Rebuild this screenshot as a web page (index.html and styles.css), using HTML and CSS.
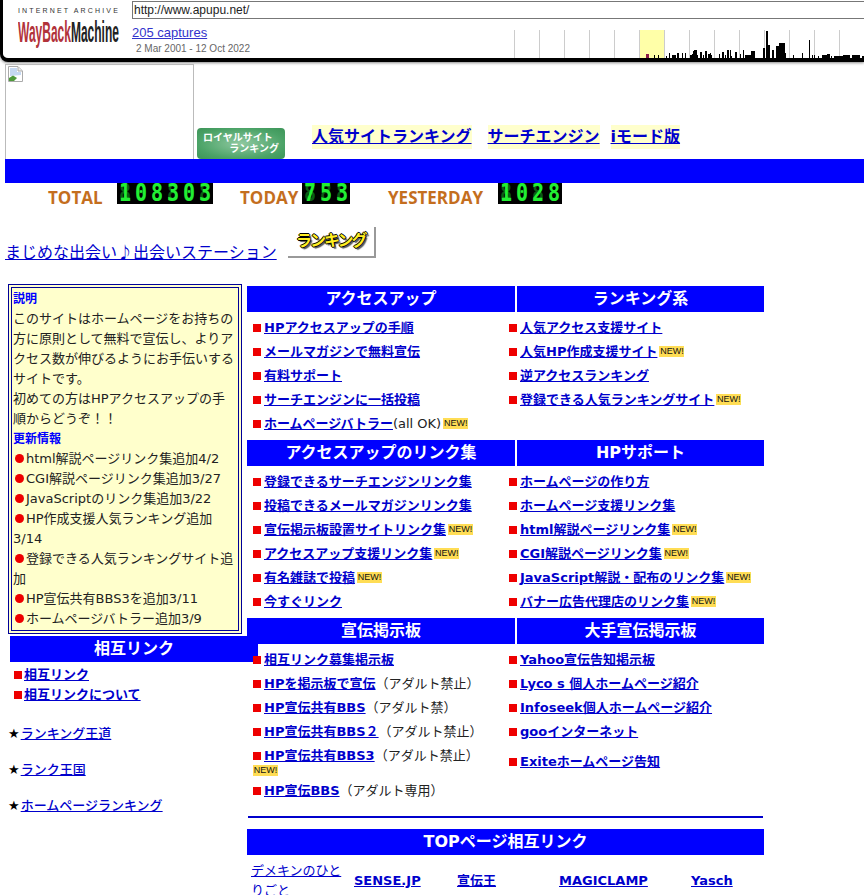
FILE: index.html
```html
<!DOCTYPE html>
<html lang="ja">
<head>
    <meta charset="UTF-8">
    <title>相互リンク</title>
    <link rel="stylesheet" href="styles.css">
</head>
<body>
    <div class="toolbar">
        <div class="wb-logo">
            <div class="wb-ia">INTERNET ARCHIVE</div>
            <div class="wb-mark"><span class="wb-red">WayBack</span>Machine</div>
        </div>
        <div class="wb-main">
            <div class="wb-url">http://www.apupu.net/</div>
            <div class="wb-info">
                <div>
                    <a class="wb-captures" href="#">205 captures</a>
                    <div class="wb-dates">2 Mar 2001 - 12 Oct 2022</div>
                </div>
                <svg class="wb-graph" width="350" height="28" viewBox="514 30 350 28">
                    <rect x="640" y="30" width="24" height="28" fill="#ffffa8"/>
                    <path stroke="#ccc" d="M514.5 30V58M539.5 30V58M564.5 30V58M589.5 30V58M614.5 30V58M639.5 30V58M664.5 30V58M689.5 30V58M714.5 30V58M739.5 30V58M764.5 30V58M789.5 30V58M814.5 30V58M839.5 30V58"/>
                    <path stroke="#8a1c4a" stroke-width="3" d="M647.5 58v-4"/>
                    <path stroke="#000" d="M654.5 58v-3M658.5 58v-3M666.5 58v-2M669.5 58v-5M672.5 58v-3M673.5 58v-3M674.5 58v-3M675.5 58v-3M677.5 58v-5M678.5 58v-5M682.5 58v-5M685.5 58v-5M690.5 58v-3M691.5 58v-3M692.5 58v-4M693.5 58v-7M694.5 58v-8M695.5 58v-8M696.5 58v-8M697.5 58v-3M700.5 58v-6M701.5 58v-6M703.5 58v-3M705.5 58v-7M706.5 58v-7M708.5 58v-4M709.5 58v-4M710.5 58v-5M711.5 58v-3M719.5 58v-4M722.5 58v-6M723.5 58v-6M725.5 58v-3M727.5 58v-8M728.5 58v-8M730.5 58v-8M731.5 58v-2M735.5 58v-6M736.5 58v-6M740.5 58v-4M743.5 58v-8M745.5 58v-3M746.5 58v-3M747.5 58v-3M748.5 58v-3M749.5 58v-3M750.5 58v-3M751.5 58v-7M752.5 58v-7M753.5 58v-7M754.5 58v-7M763.5 58v-10M764.5 58v-10M766.5 58v-27M767.5 58v-27M768.5 58v-13M769.5 58v-13M772.5 58v-8M773.5 58v-8M776.5 58v-12M777.5 58v-12M778.5 58v-12M779.5 58v-15M780.5 58v-15M781.5 58v-15M782.5 58v-15M783.5 58v-15M784.5 58v-15M785.5 58v-5M793.5 58v-3M802.5 58v-5M809.5 58v-18M812.5 58v-3M814.5 58v-3M818.5 58v-2M822.5 58v-3M823.5 58v-3M824.5 58v-3M825.5 58v-3M826.5 58v-3M827.5 58v-4M828.5 58v-4M829.5 58v-4M831.5 58v-2M834.5 58v-2M835.5 58v-2M836.5 58v-2M837.5 58v-2M838.5 58v-2M839.5 58v-2M840.5 58v-2M841.5 58v-2M842.5 58v-2M843.5 58v-3M844.5 58v-3M845.5 58v-3M846.5 58v-3M847.5 58v-3M848.5 58v-3M849.5 58v-3M852.5 58v-3M853.5 58v-3M854.5 58v-3M855.5 58v-3M856.5 58v-3M857.5 58v-3M858.5 58v-3M859.5 58v-3M862.5 58v-2M863.5 58v-2"/>
                </svg>
            </div>
        </div>
    </div>

    <div class="hero">
        <div class="broken-img">
            <svg width="16" height="16" viewBox="0 0 16 16">
                <path d="M1.500.5H11L15.500 5V15.500H1.500Z" fill="#fff" stroke="#aaa"/>
                <path d="M3 2H10V6H14V9L3 10Z" fill="#c5d8f2"/>
                <path d="M2 15V12L6 9.500L10 12L7 15Z" fill="#4f9a3c"/>
                <path d="M11 1V5H15" fill="#eee" stroke="#aaa"/>
            </svg>
        </div>
        <div class="royal-banner">
            <span>ロイヤルサイト</span>
            <span class="royal-second">ランキング</span>
        </div>
        <div class="top-nav">
            <a href="#">人気サイトランキング</a>
            <a href="#">サーチエンジン</a>
            <a href="#">iモード版</a>
        </div>
    </div>
    <div class="band"></div>

    <div class="stats">
        <div class="stat-label total">TOTAL</div>
        <div class="counter"><span>1</span><span>0</span><span>8</span><span>3</span><span>0</span><span>3</span></div>
        <div class="stat-label today">TODAY</div>
        <div class="counter"><span>7</span><span>5</span><span>3</span></div>
        <div class="stat-label yesterday">YESTERDAY</div>
        <div class="counter"><span>1</span><span>0</span><span>2</span><span>8</span></div>
    </div>

    <div class="promo">
        <a href="#">まじめな出会い♪出会いステーション</a>
        <div class="rank-btn">ランキング</div>
    </div>

    <div class="main">
        <div class="left-col">
            <div class="about">
                <div class="about-title">説明</div>
                <p>このサイトはホームページをお持ちの方に原則として無料で宣伝し、よりアクセス数が伸びるようにお手伝いするサイトです。</p>
                <p>初めての方はHPアクセスアップの手順からどうぞ！！</p>
                <div class="about-title">更新情報</div>
                <ul class="news">
                    <li>html解説ページリンク集追加4/2</li>
                    <li>CGI解説ページリンク集追加3/27</li>
                    <li>JavaScriptのリンク集追加3/22</li>
                    <li>HP作成支援人気ランキング追加3/14</li>
                    <li>登録できる人気ランキングサイト追加</li>
                    <li>HP宣伝共有BBS3を追加3/11</li>
                    <li>ホームページバトラー追加3/9</li>
                </ul>
            </div>
            <div class="head side-head">相互リンク</div>
            <ul class="side-links">
                <li class="item"><a href="#">相互リンク</a></li>
                <li class="item"><a href="#">相互リンクについて</a></li>
            </ul>
            <ul class="stars">
                <li><a href="#">ランキング王道</a></li>
                <li><a href="#">ランク王国</a></li>
                <li><a href="#">ホームページランキング</a></li>
            </ul>
        </div>

        <div class="right-col">
            <section class="block">
                <div class="heads"><div class="head">アクセスアップ</div><div class="head">ランキング系</div></div>
                <div class="rows">
                    <div class="item"><a href="#">HPアクセスアップの手順</a></div>
                    <div class="item"><a href="#">人気アクセス支援サイト</a></div>
                    <div class="item"><a href="#">メールマガジンで無料宣伝</a></div>
                    <div class="item"><a href="#">人気HP作成支援サイト</a><span class="new">NEW!</span></div>
                    <div class="item"><a href="#">有料サポート</a></div>
                    <div class="item"><a href="#">逆アクセスランキング</a></div>
                    <div class="item"><a href="#">サーチエンジンに一括投稿</a></div>
                    <div class="item"><a href="#">登録できる人気ランキングサイト</a><span class="new">NEW!</span></div>
                    <div class="item"><a href="#">ホームページバトラー</a>(all OK)<span class="new">NEW!</span></div>
                </div>
            </section>
            <section class="block">
                <div class="heads"><div class="head">アクセスアップのリンク集</div><div class="head">HPサポート</div></div>
                <div class="rows">
                    <div class="item"><a href="#">登録できるサーチエンジンリンク集</a></div>
                    <div class="item"><a href="#">ホームページの作り方</a></div>
                    <div class="item"><a href="#">投稿できるメールマガジンリンク集</a></div>
                    <div class="item"><a href="#">ホームページ支援リンク集</a></div>
                    <div class="item"><a href="#">宣伝掲示板設置サイトリンク集</a><span class="new">NEW!</span></div>
                    <div class="item"><a href="#">html解説ページリンク集</a><span class="new">NEW!</span></div>
                    <div class="item"><a href="#">アクセスアップ支援リンク集</a><span class="new">NEW!</span></div>
                    <div class="item"><a href="#">CGI解説ページリンク集</a><span class="new">NEW!</span></div>
                    <div class="item"><a href="#">有名雑誌で投稿</a><span class="new">NEW!</span></div>
                    <div class="item"><a href="#">JavaScript解説・配布のリンク集</a><span class="new">NEW!</span></div>
                    <div class="item"><a href="#">今すぐリンク</a></div>
                    <div class="item"><a href="#">バナー広告代理店のリンク集</a><span class="new">NEW!</span></div>
                </div>
            </section>
            <section class="block">
                <div class="heads"><div class="head">宣伝掲示板</div><div class="head">大手宣伝掲示板</div></div>
                <div class="rows">
                    <div class="item"><a href="#">相互リンク募集掲示板</a></div>
                    <div class="item"><a href="#">Yahoo宣伝告知掲示板</a></div>
                    <div class="item"><a href="#">HPを掲示板で宣伝</a>（アダルト禁止）</div>
                    <div class="item"><a href="#">Lyco s 個人ホームページ紹介</a></div>
                    <div class="item"><a href="#">HP宣伝共有BBS</a>（アダルト禁）</div>
                    <div class="item"><a href="#">Infoseek個人ホームページ紹介</a></div>
                    <div class="item"><a href="#">HP宣伝共有BBS２</a>（アダルト禁止）</div>
                    <div class="item"><a href="#">gooインターネット</a></div>
                    <div class="item tall"><a href="#">HP宣伝共有BBS3</a>（アダルト禁止）<br><span class="new under">NEW!</span></div>
                    <div class="item"><a href="#">Exiteホームページ告知</a></div>
                    <div class="item"><a href="#">HP宣伝BBS</a>（アダルト専用）</div>
                </div>
            </section>
            <hr class="rule">
            <div class="head">TOPページ相互リンク</div>
            <div class="top-links">
                <a class="plain" href="#">デメキンのひとりごと</a>
                <a href="#">SENSE.JP</a>
                <a href="#">宣伝王</a>
                <a href="#">MAGICLAMP</a>
                <a href="#">Yasch</a>
            </div>
        </div>
    </div>
</body>
</html>
```

FILE: styles.css
```css
* {
    box-sizing: border-box;
}

html, body {
    margin: 0;
    width: 864px;
    height: 895px;
    overflow: hidden;
}

body {
    background: #fff;
    color: #222;
    font-family: "DejaVu Sans", "Noto Sans CJK JP", sans-serif;
    font-size: 13px;
}

a {
    color: #0000cc;
}

ul {
    margin: 0;
    padding: 0;
    list-style: none;
}

/* wayback bar */
.toolbar {
    display: flex;
    height: 62px;
    background: #fff;
    border: solid #000;
    border-width: 0 0 4px 3px;
    border-bottom-left-radius: 8px;
    box-shadow: 0 1px 3px #888;
    font-family: "Liberation Sans", sans-serif;
}

.wb-logo {
    width: 129px;
    padding: 7px 0 0 15px;
}

.wb-ia {
    font-size: 7px;
    line-height: 8px;
    letter-spacing: 2.15px;
    color: #333;
    white-space: nowrap;
}

.wb-mark {
    width: 100px;
    margin-top: 10px;
    font-size: 15px;
    line-height: 14px;
    font-weight: bold;
    color: #222;
    white-space: nowrap;
    transform: scale(0.8, 2);
    transform-origin: left center;
}

.wb-red {
    color: #b2333a;
}

.wb-main {
    flex: 1;
    padding-top: 1px;
}

.wb-url {
    height: 18px;
    padding-left: 1px;
    border: solid #777;
    border-width: 1px 0 1px 1px;
    font-size: 12px;
    line-height: 16px;
}

.wb-info {
    display: flex;
    justify-content: space-between;
}

.wb-captures {
    display: block;
    margin-top: 7px;
    color: #3333cc;
    font-size: 13px;
    line-height: 14px;
}

.wb-dates {
    margin: 4px 0 0 4px;
    color: #666;
    font-size: 10px;
    line-height: 10px;
}

.wb-graph {
    display: block;
    margin-top: 11px;
    shape-rendering: crispEdges;
}

/* header */
.hero {
    display: flex;
    align-items: flex-end;
    height: 95px;
    margin: 2px 0 0 5px;
}

.broken-img {
    width: 189px;
    height: 95px;
    padding: 1px;
    border: 1px solid #bbb;
    border-bottom: 0;
}

.broken-img svg {
    display: block;
}

.royal-banner {
    display: flex;
    flex-direction: column;
    width: 88px;
    height: 31px;
    margin-left: 3px;
    padding: 4px 6px;
    background: radial-gradient(ellipse at center, #8fc8a0 0%, #4aa266 70%, #3d9458 100%);
    border-radius: 4px;
    color: #fff;
    font-size: 10px;
    line-height: 11px;
    font-weight: bold;
    white-space: nowrap;
}

.royal-second {
    align-self: flex-end;
}

.top-nav {
    display: flex;
    margin: 0 0 10px 27px;
    font-size: 16px;
    font-weight: bold;
    line-height: 24px;
}

.top-nav a {
    margin-right: 16px;
    background: #ffffcc;
}

.top-nav a:nth-child(2) {
    margin-right: 11px;
}

.band {
    height: 24px;
    margin-left: 5px;
    background: #0000ff;
}

/* counters */
.stats {
    display: flex;
    height: 44px;
    padding-left: 48px;
}

.stat-label {
    padding-top: 4px;
    color: #c46e1e;
    font-family: "Open Sans", sans-serif;
    font-size: 17px;
    font-weight: bold;
    line-height: 22px;
}

.total {
    width: 69px;
}

.today {
    width: 62px;
    margin-left: 27px;
}

.yesterday {
    width: 110px;
    margin-left: 38px;
}

.counter {
    display: flex;
    height: 21px;
    background: #000;
}

.counter span {
    position: relative;
    z-index: 0;
    width: 16px;
    height: 21px;
    color: #22ee33;
    font-family: "DejaVu Sans Mono", monospace;
    font-size: 20px;
    font-weight: bold;
    line-height: 21px;
    text-align: center;
    transform: scaleY(1.2);
}

/* unlit segments behind each digit */
.counter span::before {
    content: "8";
    position: absolute;
    left: 0;
    right: 0;
    z-index: -1;
    color: #0a5c14;
}

.promo {
    display: flex;
    align-items: flex-end;
    height: 31px;
    margin-left: 5px;
}

.promo a {
    margin-bottom: -4px;
    font-family: "Noto Sans CJK JP", sans-serif;
    font-size: 16px;
    line-height: 22px;
}

.rank-btn {
    width: 88px;
    height: 31px;
    margin-left: 11px;
    background: #fff;
    border: solid #999;
    border-width: 0 2px 2px 0;
    color: #ffee22;
    font-size: 16px;
    font-weight: bold;
    letter-spacing: -2px;
    line-height: 27px;
    text-align: center;
    text-shadow: 1px 0 #000, -1px 0 #000, 0 1px #000, 0 -1px #000, 2px 2px 1px #555;
}

/* main columns */
.main {
    display: flex;
    align-items: flex-start;
    margin: 26px 0 0 8px;
}

.left-col {
    width: 239px;
    flex-shrink: 0;
}

.right-col {
    position: relative;
    z-index: 1;
    width: 517px;
    padding-top: 2px;
}

.about {
    width: 234px;
    padding: 1px 1px;
    background: #ffffcc;
    border: 4px double #000099;
    line-height: 20px;
}

.about p {
    margin: 0;
}

.about-title {
    color: #0000ff;
    font-size: 12px;
    font-weight: bold;
}

.news li::before {
    content: "";
    display: inline-block;
    width: 9px;
    height: 9px;
    margin: 0 2px 0 2px;
    background: #ee0000;
    border-radius: 50%;
}

.head {
    height: 26px;
    background: #0000ff;
    color: #fff;
    font-size: 16px;
    font-weight: bold;
    line-height: 25px;
    text-align: center;
}

.side-head {
    width: 248px;
    margin: 2px 0 0 2px;
}

.side-links {
    margin-top: 3px;
    padding-left: 6px;
}

.side-links .item {
    height: 20px;
    line-height: 20px;
}

.side-links .item::before {
    margin-right: 2px;
}

.item {
    font-size: 13px;
    line-height: 18px;
    white-space: nowrap;
}

.item a {
    font-weight: bold;
}

.item::before {
    content: "";
    display: inline-block;
    width: 8px;
    height: 8px;
    margin-right: 3px;
    background: #ee0000;
}

.stars {
    margin-top: 19px;
    font-size: 13px;
}

.stars li {
    height: 36px;
    line-height: 20px;
}

.stars li::before {
    content: "★";
    margin-right: 1px;
    color: #000;
}

.stars a {
    font-weight: 500;
}

.heads {
    display: grid;
    grid-template-columns: 268px 247px;
    gap: 2px;
}

.rows {
    display: grid;
    grid-template-columns: 256px 1fr;
    grid-auto-rows: minmax(24px, auto);
    align-items: center;
    padding: 4px 0 4px 6px;
}

.tall {
    height: 35px;
    padding-top: 3px;
}

.new {
    display: inline-block;
    width: 25px;
    height: 11px;
    margin-left: 2px;
    background: #ffdd55;
    color: #111;
    font-family: "Liberation Sans", sans-serif;
    font-size: 9px;
    line-height: 11px;
    text-align: center;
    vertical-align: 2px;
}

.under {
    display: block;
    margin-left: 0;
}

.rule {
    height: 2px;
    margin: 9px 1px 11px;
    background: #0000cc;
    border: 0;
}

.top-links {
    display: grid;
    grid-template-columns: 103px 103px 102px 132px auto;
    align-items: center;
    padding: 6px 0 0 4px;
    font-size: 13px;
    font-weight: bold;
    line-height: 20px;
}

.top-links .plain {
    font-weight: normal;
}
```
